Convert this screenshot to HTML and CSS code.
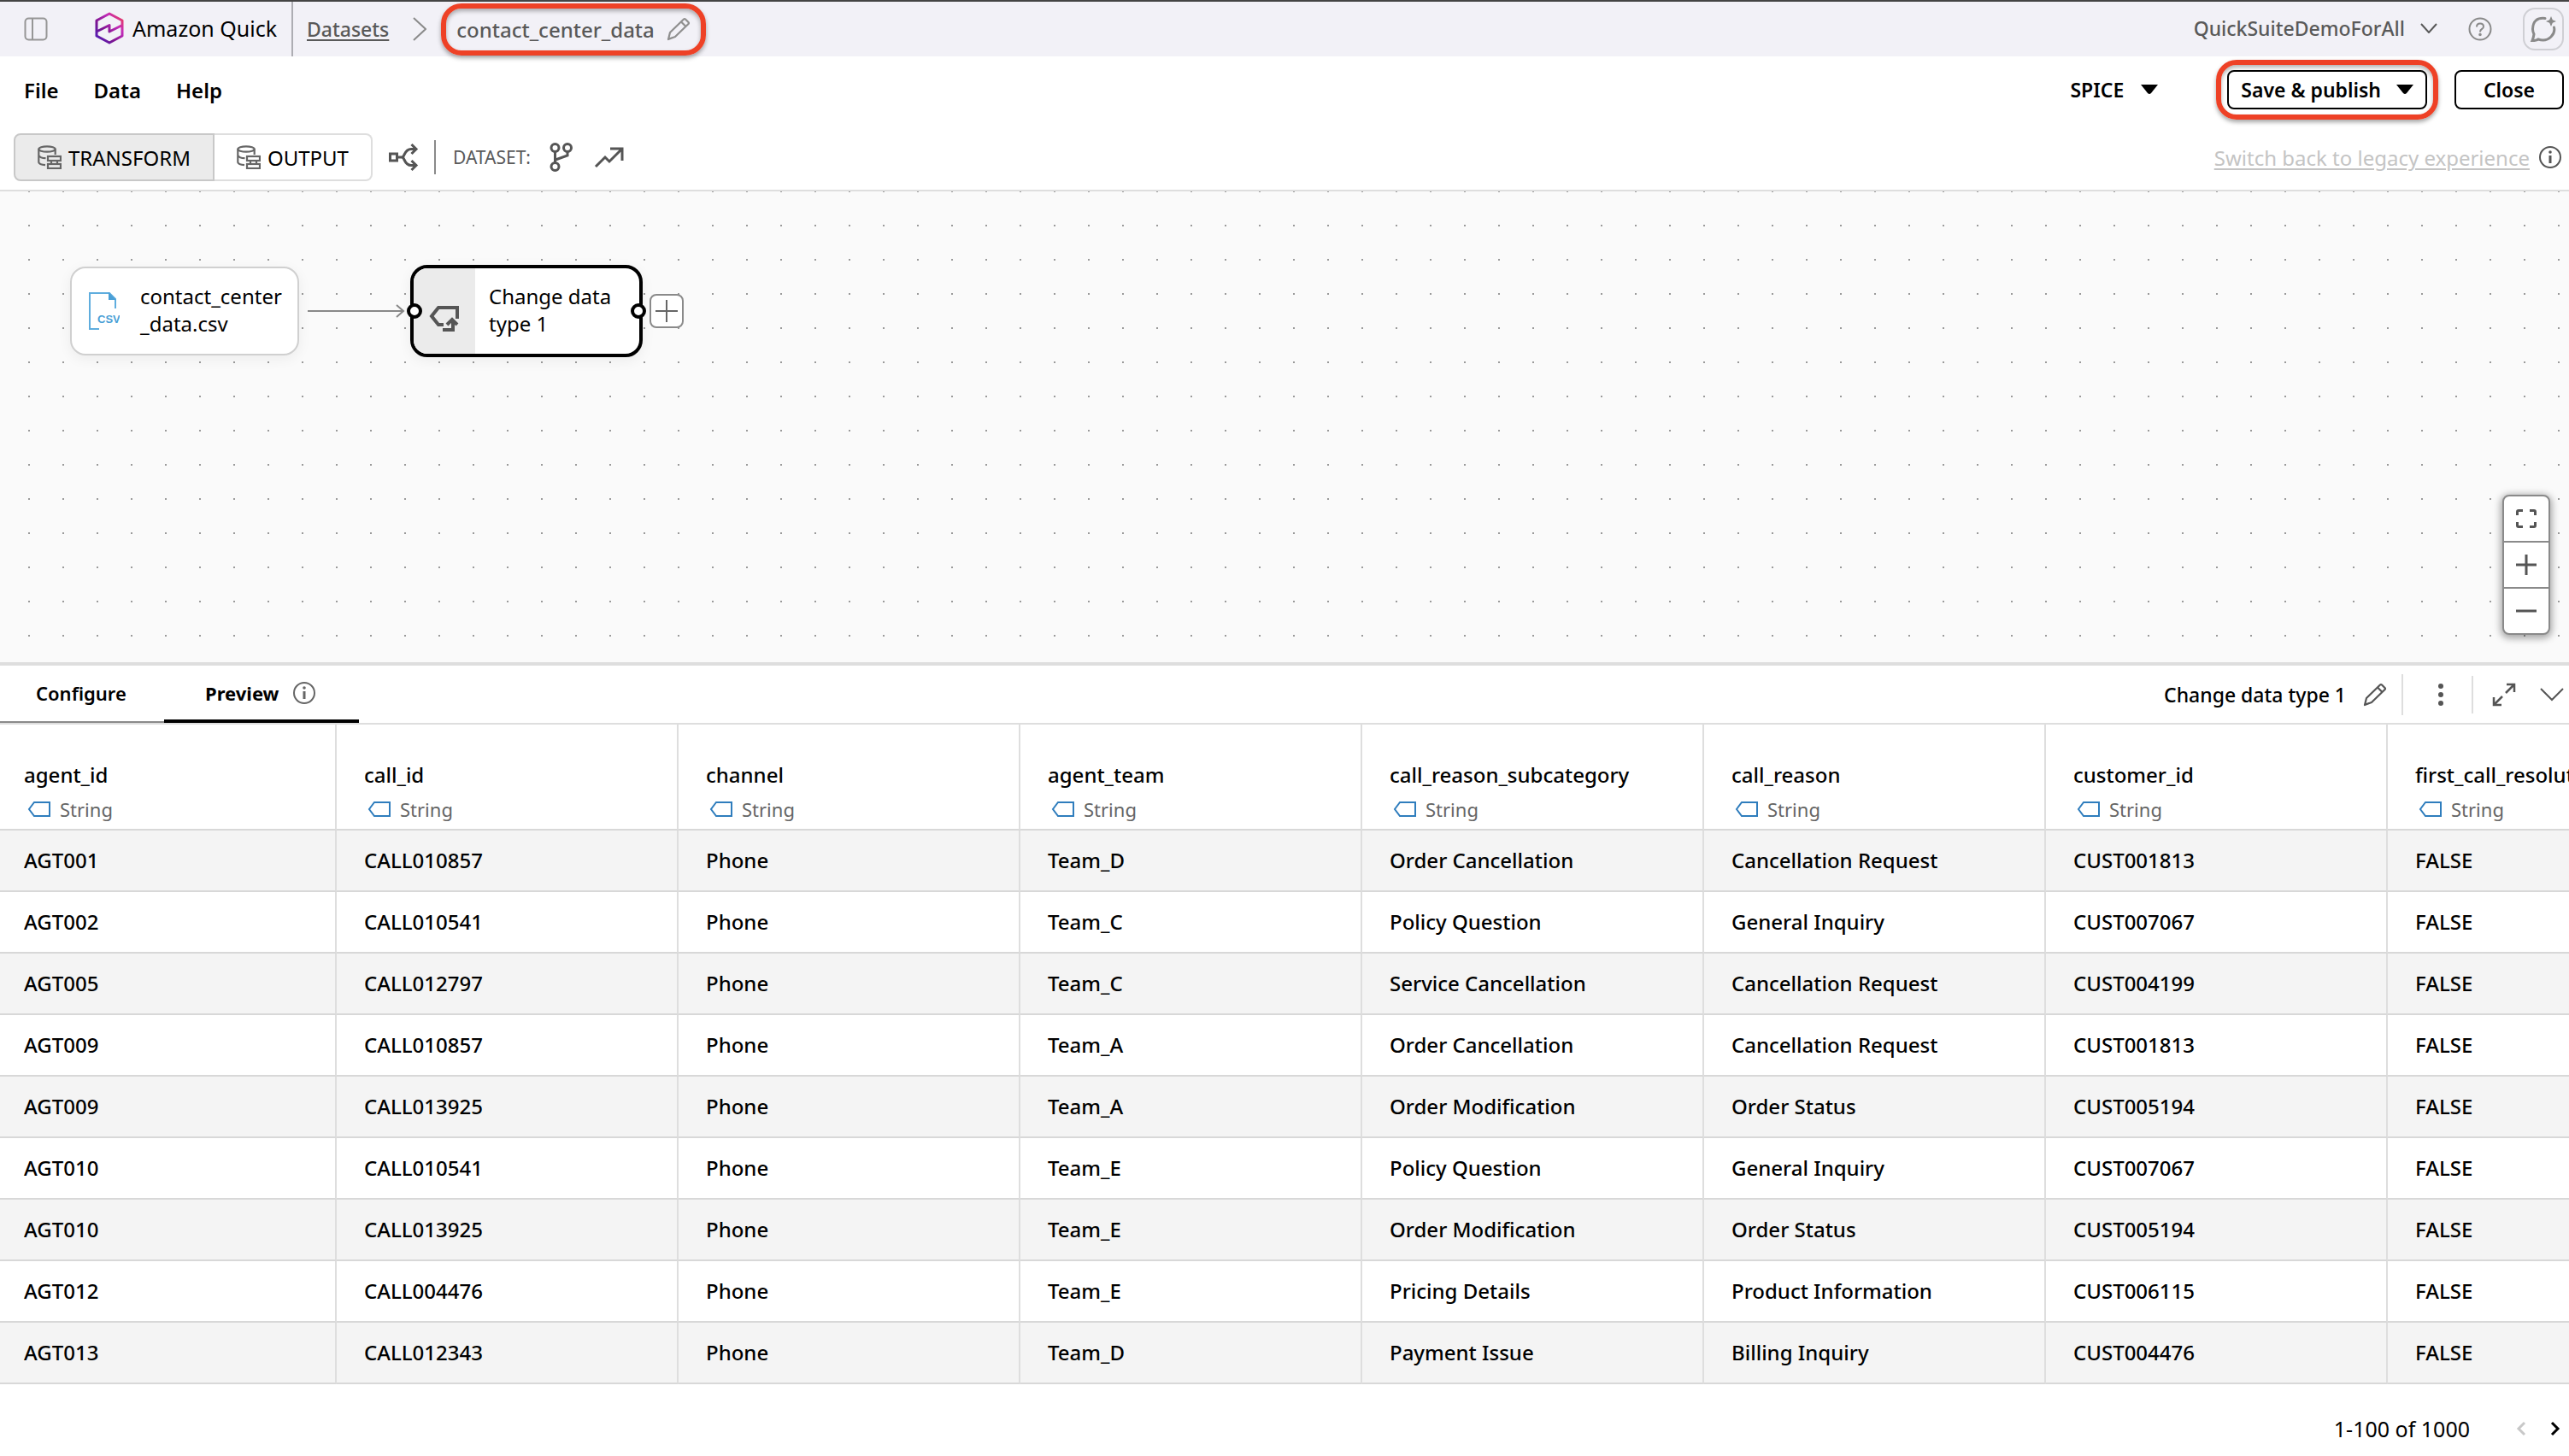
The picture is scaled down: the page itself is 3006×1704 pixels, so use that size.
FILE: index.html
```html
<!DOCTYPE html>
<html lang="en">
<head>
  <meta charset="UTF-8" />
  <meta name="viewport" content="width=device-width, initial-scale=1" />
  <title>contact_center_data - Amazon Quick</title>
  <link rel="stylesheet" href="styles.css">
</head>
<body>
  <!-- shared icons -->
  <svg class="sprite" aria-hidden="true">
    <defs>
      <linearGradient id="logoGradient" x1="0" y1="1" x2="1" y2="0">
        <stop offset="0" stop-color="#4a1fc0" />
        <stop offset="0.35" stop-color="#7a1490" />
        <stop offset="0.7" stop-color="#c42bb8" />
        <stop offset="1" stop-color="#f0404a" />
      </linearGradient>
    </defs>
    <symbol id="icon-string" viewBox="0 0 28 20">
      <path d="M8 2H26V18H8L2 10Z" fill="none" stroke="#2f7dbd" stroke-width="2" />
    </symbol>
    <symbol id="icon-pencil" viewBox="0 0 28 28">
      <path d="M2 26L4 18L20 2.500Q21 1.500 22 2.500L25.500 6Q26.500 7 25.500 8L10 23Z M17 5.500L22.500 11 M2.500 25.500L7 24" fill="none" stroke="currentColor" stroke-width="2.200" stroke-linejoin="round" />
    </symbol>
    <symbol id="icon-info" viewBox="0 0 28 28">
      <circle cx="14" cy="14" r="12" fill="none" stroke="currentColor" stroke-width="2" />
      <path d="M14 12V21" stroke="currentColor" stroke-width="3" />
      <circle cx="14" cy="8" r="1.800" fill="currentColor" />
    </symbol>
    <symbol id="icon-database" viewBox="0 0 28 28">
      <g fill="none" stroke="currentColor" stroke-width="2.200">
        <ellipse cx="11" cy="4.500" rx="9.700" ry="3.200" />
        <path d="M1.300 4.500V20Q2 22.600 9 23.200 M20.700 4.500V11 M1.300 12Q3 15 9.500 15.200" />
        <rect x="12" y="13" width="15" height="5" />
        <rect x="12" y="22" width="15" height="5" />
        <path d="M16 18V22 M23 18V22" />
      </g>
    </symbol>
    <symbol id="icon-caret" viewBox="0 0 20 12">
      <path d="M0 0H20L12 10Q10 12 8 10Z" fill="currentColor" />
    </symbol>
  </svg>

  <header class="topbar">
    <button class="icon-button sidebar-toggle" aria-label="Toggle sidebar">
      <svg width="28" height="28" viewBox="0 0 28 28" fill="none" stroke="#969696" stroke-width="2"><rect x="1.500" y="1.500" width="25" height="25" rx="4" /><path d="M10 2V26" /></svg>
    </button>
    <div class="brand">
      <svg width="34" height="38" viewBox="0 0 34 38" fill="none" stroke="url(#logoGradient)" stroke-width="3" stroke-linejoin="round"><path d="M17 2L32 10V28L17 36L2 28V10Z M2 23L17 15.500V23L32 15.500" /></svg>
      <span>Amazon Quick</span>
    </div>
    <nav class="breadcrumb" aria-label="Breadcrumb">
      <a href="#datasets">Datasets</a>
      <svg class="crumb-arrow" width="16" height="28" viewBox="0 0 16 28" fill="none" stroke="#8a8a8a" stroke-width="2"><path d="M1 1L15 14L1 27" /></svg>
      <div class="dataset-name highlight">
        <span>contact_center_data</span>
        <button class="icon-button" aria-label="Rename dataset"><svg width="28" height="28"><use href="#icon-pencil" /></svg></button>
      </div>
    </nav>
    <div class="account">
      <button class="account-name">QuickSuiteDemoForAll
        <svg width="20" height="12" viewBox="0 0 20 12" fill="none" stroke="currentColor" stroke-width="2"><path d="M1 1L10 11L19 1" /></svg>
      </button>
      <button class="icon-button help" aria-label="Help">
        <svg width="28" height="28" viewBox="0 0 28 28" fill="none" stroke="currentColor" stroke-width="2"><circle cx="14" cy="14" r="12.500" /><path d="M10 11.500Q10 7.500 14 7.500Q18 7.500 18 11Q18 13 16 14Q14 15 14 17.500" /><circle cx="14" cy="20.500" r="0.800" fill="currentColor" /></svg>
      </button>
      <button class="icon-button chat" aria-label="Open chat">
        <svg width="32" height="32" viewBox="0 0 32 32" fill="none" stroke="#8a8a8a" stroke-width="3" stroke-linecap="round"><path d="M18 3.500Q4 2 3.500 16Q3.500 19 5 22Q4.500 26 3 29.500Q8 29.500 10 28Q19 31 25 25Q30 20 28.500 14" /><path d="M25 1L26.800 5.200L31 7L26.800 8.800L25 13L23.200 8.800L19 7L23.200 5.200Z" fill="#8a8a8a" stroke="none" /></svg>
      </button>
    </div>
  </header>

  <div class="menubar">
    <nav class="menus">
      <button>File</button>
      <button>Data</button>
      <button>Help</button>
    </nav>
    <div class="actions">
      <button class="spice">SPICE <svg width="20" height="12"><use href="#icon-caret" /></svg></button>
      <div class="highlight publish">
        <button class="outlined">Save &amp; publish <svg width="20" height="12"><use href="#icon-caret" /></svg></button>
      </div>
      <button class="outlined close">Close</button>
    </div>
  </div>

  <div class="toolbar">
    <div class="segmented">
      <button class="selected"><svg width="28" height="28"><use href="#icon-database" /></svg>TRANSFORM</button>
      <button><svg width="28" height="28"><use href="#icon-database" /></svg>OUTPUT</button>
    </div>
    <button class="icon-button split" aria-label="Lineage">
      <svg width="36" height="34" viewBox="0 0 36 34" fill="none" stroke="currentColor" stroke-width="3"><rect x="2.500" y="13" width="8" height="8" /><path d="M11 17H16Q18 17 19 14Q22 7.500 27 7.500H33 M16 17Q18 17 19 20Q22 26.500 27 26.500H33 M27.500 2L33 7.500L27.500 13 M27.500 21L33 26.500L27.500 32" /></svg>
    </button>
    <span class="toolbar-divider"></span>
    <span class="toolbar-label">DATASET:</span>
    <button class="icon-button branch" aria-label="Versions">
      <svg width="28" height="36" viewBox="0 0 28 36" fill="none" stroke="currentColor" stroke-width="3"><circle cx="6.500" cy="7" r="4.500" /><circle cx="21" cy="7" r="4.500" /><circle cx="6.500" cy="29" r="4.500" /><path d="M6.500 12V24 M21 12V16L7 21" /></svg>
    </button>
    <button class="icon-button" aria-label="Activity">
      <svg width="36" height="26" viewBox="0 0 36 26" fill="none" stroke="currentColor" stroke-width="3"><path d="M2 24L13 13L18 18L33 3 M19 3H33V17" /></svg>
    </button>
    <div class="legacy">
      <a href="#legacy">Switch back to legacy experience</a>
      <svg width="28" height="28"><use href="#icon-info" /></svg>
    </div>
  </div>

  <main class="canvas">
    <div class="node source">
      <svg width="36" height="46" viewBox="0 0 36 46"><path d="M12 44H1V2H24L31 9V20" fill="none" stroke="#5fadde" stroke-width="2" /><path d="M23 1L32 10H23Z" fill="#4a9fd6" /><text x="10" y="37" font-family="Liberation Sans, sans-serif" font-size="13" font-weight="bold" fill="#4a9fd6">CSV</text></svg>
      <span>contact_center<br>_data.csv</span>
    </div>
    <svg class="edge" width="114" height="18" viewBox="0 0 114 18" fill="none" stroke="#888" stroke-width="2"><path d="M0 9H112 M104 2L112 9L104 16" /></svg>
    <div class="node step">
      <div class="step-icon">
        <svg width="36" height="32" viewBox="0 0 36 32" fill="none" stroke="#555" stroke-width="4"><path d="M17 23H11L3 13L11 3H33V16 M16 29H28V20 M21 23L27 17L33 23" /></svg>
      </div>
      <span>Change data<br>type 1</span>
      <i class="handle handle-in"></i>
      <i class="handle handle-out"></i>
    </div>
    <button class="add-step" aria-label="Add step">
      <svg width="28" height="28" viewBox="0 0 28 28" stroke="#666" stroke-width="2"><path d="M14 1V27 M1 14H27" /></svg>
    </button>
    <div class="zoom">
      <button aria-label="Fit view"><svg width="26" height="24" viewBox="0 0 26 24" fill="none" stroke="#555" stroke-width="3"><path d="M2.500 8V4Q2.500 2.500 4 2.500H9 M17 2.500H22Q23.500 2.500 23.500 4V8 M23.500 16V20Q23.500 21.500 22 21.500H17 M9 21.500H4Q2.500 21.500 2.500 20V16" /></svg></button>
      <button aria-label="Zoom in"><svg width="24" height="24" viewBox="0 0 24 24" stroke="#555" stroke-width="3"><path d="M12 0V24 M0 12H24" /></svg></button>
      <button aria-label="Zoom out"><svg width="24" height="24" viewBox="0 0 24 24" stroke="#555" stroke-width="3"><path d="M0 12H24" /></svg></button>
    </div>
  </main>

  <section class="panel">
    <div class="panel-head">
      <div class="tabs" role="tablist">
        <button class="tab" role="tab" aria-selected="false">Configure</button>
        <button class="tab active" role="tab" aria-selected="true">Preview <svg width="28" height="28"><use href="#icon-info" /></svg></button>
      </div>
      <div class="panel-tools">
        <span class="step-name">Change data type 1</span>
        <button class="icon-button rename" aria-label="Rename step"><svg width="28" height="28"><use href="#icon-pencil" /></svg></button>
        <button class="icon-button more" aria-label="More options"><svg width="8" height="28" viewBox="0 0 8 28" fill="currentColor"><circle cx="4" cy="4" r="3" /><circle cx="4" cy="14" r="3" /><circle cx="4" cy="24" r="3" /></svg></button>
        <button class="icon-button expand" aria-label="Expand"><svg width="28" height="28" viewBox="0 0 28 28" fill="none" stroke="currentColor" stroke-width="2.500"><path d="M17 2H26V11 M26 2L16 12 M2 17V26H11 M2 26L12 16" /></svg></button>
        <button class="icon-button" aria-label="Collapse"><svg width="28" height="16" viewBox="0 0 28 16" fill="none" stroke="currentColor" stroke-width="2"><path d="M1 1L14 14L27 1" /></svg></button>
      </div>
    </div>

    <div class="table-wrap">
      <table>
        <thead>
          <tr>
            <th scope="col">agent_id<span class="type"><svg width="28" height="20"><use href="#icon-string" /></svg>String</span></th>
            <th scope="col">call_id<span class="type"><svg width="28" height="20"><use href="#icon-string" /></svg>String</span></th>
            <th scope="col">channel<span class="type"><svg width="28" height="20"><use href="#icon-string" /></svg>String</span></th>
            <th scope="col">agent_team<span class="type"><svg width="28" height="20"><use href="#icon-string" /></svg>String</span></th>
            <th scope="col">call_reason_subcategory<span class="type"><svg width="28" height="20"><use href="#icon-string" /></svg>String</span></th>
            <th scope="col">call_reason<span class="type"><svg width="28" height="20"><use href="#icon-string" /></svg>String</span></th>
            <th scope="col">customer_id<span class="type"><svg width="28" height="20"><use href="#icon-string" /></svg>String</span></th>
            <th scope="col">first_call_resolution<span class="type"><svg width="28" height="20"><use href="#icon-string" /></svg>String</span></th>
          </tr>
        </thead>
        <tbody>
          <tr><td>AGT001</td><td>CALL010857</td><td>Phone</td><td>Team_D</td><td>Order Cancellation</td><td>Cancellation Request</td><td>CUST001813</td><td>FALSE</td></tr>
          <tr><td>AGT002</td><td>CALL010541</td><td>Phone</td><td>Team_C</td><td>Policy Question</td><td>General Inquiry</td><td>CUST007067</td><td>FALSE</td></tr>
          <tr><td>AGT005</td><td>CALL012797</td><td>Phone</td><td>Team_C</td><td>Service Cancellation</td><td>Cancellation Request</td><td>CUST004199</td><td>FALSE</td></tr>
          <tr><td>AGT009</td><td>CALL010857</td><td>Phone</td><td>Team_A</td><td>Order Cancellation</td><td>Cancellation Request</td><td>CUST001813</td><td>FALSE</td></tr>
          <tr><td>AGT009</td><td>CALL013925</td><td>Phone</td><td>Team_A</td><td>Order Modification</td><td>Order Status</td><td>CUST005194</td><td>FALSE</td></tr>
          <tr><td>AGT010</td><td>CALL010541</td><td>Phone</td><td>Team_E</td><td>Policy Question</td><td>General Inquiry</td><td>CUST007067</td><td>FALSE</td></tr>
          <tr><td>AGT010</td><td>CALL013925</td><td>Phone</td><td>Team_E</td><td>Order Modification</td><td>Order Status</td><td>CUST005194</td><td>FALSE</td></tr>
          <tr><td>AGT012</td><td>CALL004476</td><td>Phone</td><td>Team_E</td><td>Pricing Details</td><td>Product Information</td><td>CUST006115</td><td>FALSE</td></tr>
          <tr><td>AGT013</td><td>CALL012343</td><td>Phone</td><td>Team_D</td><td>Payment Issue</td><td>Billing Inquiry</td><td>CUST004476</td><td>FALSE</td></tr>
        </tbody>
      </table>
    </div>

    <footer class="pager">
      <span>1-100 of 1000</span>
      <button class="icon-button" aria-label="Previous page" disabled><svg width="12" height="18" viewBox="0 0 12 18" fill="none" stroke="#c8c8c8" stroke-width="3"><path d="M10 2L3 9L10 16" /></svg></button>
      <button class="icon-button next" aria-label="Next page"><svg width="12" height="18" viewBox="0 0 12 18" fill="none" stroke="#000" stroke-width="3"><path d="M2 2L9 9L2 16" /></svg></button>
    </footer>
  </section>
</body>
</html>
```
FILE: styles.css
```css
* {
  box-sizing: border-box;
}

body {
  margin: 0;
  height: 100vh;
  display: flex;
  flex-direction: column;
  overflow: hidden;
  font-family: "Noto Sans", "Open Sans", sans-serif;
  font-size: 24px;
  color: #000;
  background-color: #fff;
}

svg {
  display: block;
  flex: none;
}

.sprite {
  position: absolute;
  width: 0;
  height: 0;
}

button {
  font: inherit;
  color: inherit;
  background: none;
  border: none;
  padding: 0;
  margin: 0;
  display: flex;
  align-items: center;
  cursor: pointer;
  white-space: nowrap;
}

.icon-button {
  justify-content: center;
  color: #555;
}

/* red callout drawn round a control */
.highlight {
  position: relative;
}

.highlight::after {
  content: "";
  position: absolute;
  top: 0;
  right: 0;
  bottom: 0;
  left: 0;
  border: 6px solid #ee4126;
  border-radius: 24px;
  box-shadow: 0 3px 5px rgba(0, 0, 0, 0.35), inset 0 3px 5px rgba(0, 0, 0, 0.3);
  pointer-events: none;
}

/* top bar */
.topbar {
  display: flex;
  align-items: center;
  height: 66px;
  padding: 0 6px 0 28px;
  background-color: #f2f1f7;
  border-top: 2px solid #444;
}

.brand {
  display: flex;
  align-items: center;
  align-self: stretch;
  gap: 10px;
  margin-left: 55px;
  padding-right: 17px;
  padding-bottom: 2px;
  border-right: 2px solid #adadb3;
  font-size: 25px;
}

.breadcrumb {
  display: flex;
  align-items: center;
  padding-left: 16px;
  color: #595959;
  font-weight: 500;
  font-size: 23px;
}

.breadcrumb a {
  color: inherit;
  text-underline-offset: 3px;
}

.crumb-arrow {
  margin: 0 17px 0 28px;
}

.dataset-name {
  display: flex;
  align-items: center;
  gap: 14px;
  height: 61px;
  padding: 0 18px;
  font-size: 24px;
}

.dataset-name .icon-button {
  color: #8f8f8f;
}

.account {
  display: flex;
  align-items: center;
  margin-left: auto;
  color: #595959;
}

.account-name {
  gap: 18px;
  padding-bottom: 2px;
  font-size: 23px;
  font-weight: 500;
}

.help {
  margin: 0 36px;
  color: #8a8a8a;
}

.chat {
  width: 48px;
  height: 50px;
  border: 2px solid #cfcfd4;
  border-radius: 14px;
}

/* menus and actions */
.menubar {
  display: flex;
  align-items: center;
  justify-content: space-between;
  height: 80px;
  padding: 0 6px 2px 28px;
  font-weight: 600;
}

.menus {
  display: flex;
  gap: 41px;
}

.actions {
  display: flex;
  align-items: center;
  font-size: 23px;
}

.spice {
  gap: 20px;
  margin-right: 68px;
}

.publish {
  padding: 12px 13px;
}

.outlined {
  justify-content: center;
  gap: 18px;
  height: 46px;
  padding: 0 14px;
  border: 2px solid #000;
  border-radius: 8px;
}

.close {
  width: 128px;
  margin-left: 19px;
}

/* toolbar */
.toolbar {
  display: flex;
  align-items: center;
  height: 78px;
  padding: 0 8px 0 16px;
  border-bottom: 2px solid #dedede;
}

.segmented {
  display: flex;
  font-size: 24px;
}

.segmented button {
  gap: 8px;
  height: 56px;
  padding: 0 26px;
  border: 2px solid #dedede;
  border-left: none;
  border-radius: 0 8px 8px 0;
}

.segmented svg {
  color: #666;
}

.segmented .selected {
  background-color: #ebebeb;
  border: 2px solid #c8c8c8;
  border-radius: 8px 0 0 8px;
}

.split {
  margin-left: 18px;
}

.toolbar-divider {
  width: 2px;
  height: 40px;
  margin: 0 20px 0 18px;
  background-color: #8a8a8a;
}

.toolbar-label {
  font-size: 21px;
  color: #595959;
}

.branch {
  margin: 0 24px 0 22px;
}

.legacy {
  display: flex;
  align-items: center;
  gap: 10px;
  margin-left: auto;
  color: #555;
}

.legacy a {
  color: #c4c4c4;
  text-underline-offset: 3px;
}

/* flow canvas with its dot grid */
.canvas {
  position: relative;
  flex: 1;
  min-height: 240px;
  background-color: #fafafa;
  background-image: conic-gradient(from 270deg at 2px 2px, #9a9a9a 90deg, transparent 0);
  background-size: 40px 40px;
  background-position: 33px 39px;
}

.node {
  position: absolute;
  display: flex;
  align-items: center;
  background-color: #fff;
  line-height: 32px;
  box-shadow: 0 4px 16px rgba(0, 0, 0, 0.06);
}

.node span {
  padding-bottom: 3px;
}

.source {
  top: 88px;
  left: 82px;
  width: 268px;
  height: 104px;
  gap: 24px;
  padding-left: 20px;
  border: 2px solid #d0d0d0;
  border-radius: 18px;
}

.edge {
  position: absolute;
  top: 131px;
  left: 360px;
}

.step {
  top: 86px;
  left: 480px;
  width: 272px;
  height: 108px;
  gap: 16px;
  border: 4px solid #000;
  border-radius: 20px;
}

.step-icon {
  display: flex;
  align-items: center;
  justify-content: center;
  align-self: stretch;
  width: 72px;
  padding-top: 18px;
  background-color: #ebebeb;
  border-radius: 16px 0 0 16px;
}

.handle {
  position: absolute;
  top: 41px;
  width: 18px;
  height: 18px;
  border: 4px solid #000;
  border-radius: 50%;
  background-color: #fff;
}

.handle-in {
  left: -8px;
}

.handle-out {
  right: -8px;
}

.add-step {
  position: absolute;
  top: 120px;
  left: 760px;
  width: 40px;
  height: 40px;
  justify-content: center;
  border: 2px solid #8a8a8a;
  border-radius: 8px;
  background-color: #fff;
}

.zoom {
  position: absolute;
  right: 22px;
  bottom: 32px;
  width: 56px;
  border: 2px solid #8a8a8a;
  border-radius: 8px;
  background-color: #fff;
  box-shadow: 0 2px 8px 2px rgba(0, 0, 0, 0.35);
}

.zoom button {
  width: 100%;
  height: 52px;
  justify-content: center;
}

.zoom button + button {
  height: 54px;
  border-top: 2px solid #8a8a8a;
}

/* preview panel */
.panel {
  border-top: 4px solid #dedede;
}

.panel-head {
  display: flex;
  justify-content: space-between;
  height: 69px;
  border-bottom: 2px solid #dedede;
}

.tabs {
  display: flex;
  font-size: 22px;
  font-weight: 600;
}

.tab {
  width: 192px;
  padding: 0 0 2px 42px;
  border-bottom: 2px solid #8a8a8a;
}

.tab.active {
  width: 228px;
  padding: 1px 0 0 48px;
  gap: 16px;
  border-bottom: 4px solid #000;
  font-weight: 700;
}

.tab svg {
  color: #666;
}

.panel-tools {
  display: flex;
  align-items: center;
  padding-right: 6px;
}

.step-name {
  font-size: 23px;
  font-weight: 500;
}

.rename {
  height: 48px;
  margin-left: 20px;
  padding-right: 17px;
  border-right: 2px solid #dedede;
}

.more {
  width: 82px;
  height: 44px;
  padding-left: 8px;
  border-right: 2px solid #dedede;
}

.expand {
  margin: 0 28px 0 22px;
}

.table-wrap {
  overflow: hidden;
}

table {
  width: 3194px;
  table-layout: fixed;
  border-collapse: separate;
  border-spacing: 0;
}

th,
td {
  width: 400px;
  padding: 0 0 2px 32px;
  border-right: 2px solid #dedede;
  border-bottom: 2px solid #d8d8d8;
  text-align: left;
  white-space: nowrap;
}

th:first-child,
td:first-child {
  width: 394px;
  padding-left: 28px;
}

th {
  height: 124px;
  padding-bottom: 5px;
  vertical-align: bottom;
  font-weight: 500;
  line-height: 44px;
}

td {
  height: 72px;
  font-weight: 500;
}

tbody tr:nth-child(odd) {
  background-color: #f4f4f4;
}

.type {
  display: flex;
  align-items: center;
  gap: 10px;
  padding-left: 4px;
  font-size: 22px;
  font-weight: 400;
  line-height: 36px;
  color: #666;
}

.pager {
  display: flex;
  align-items: center;
  height: 84px;
  padding: 20px 10px 0 0;
  justify-content: flex-end;
  font-size: 25px;
}

.pager .icon-button {
  margin-left: 54px;
}

.pager .next {
  margin-left: 28px;
}
```
